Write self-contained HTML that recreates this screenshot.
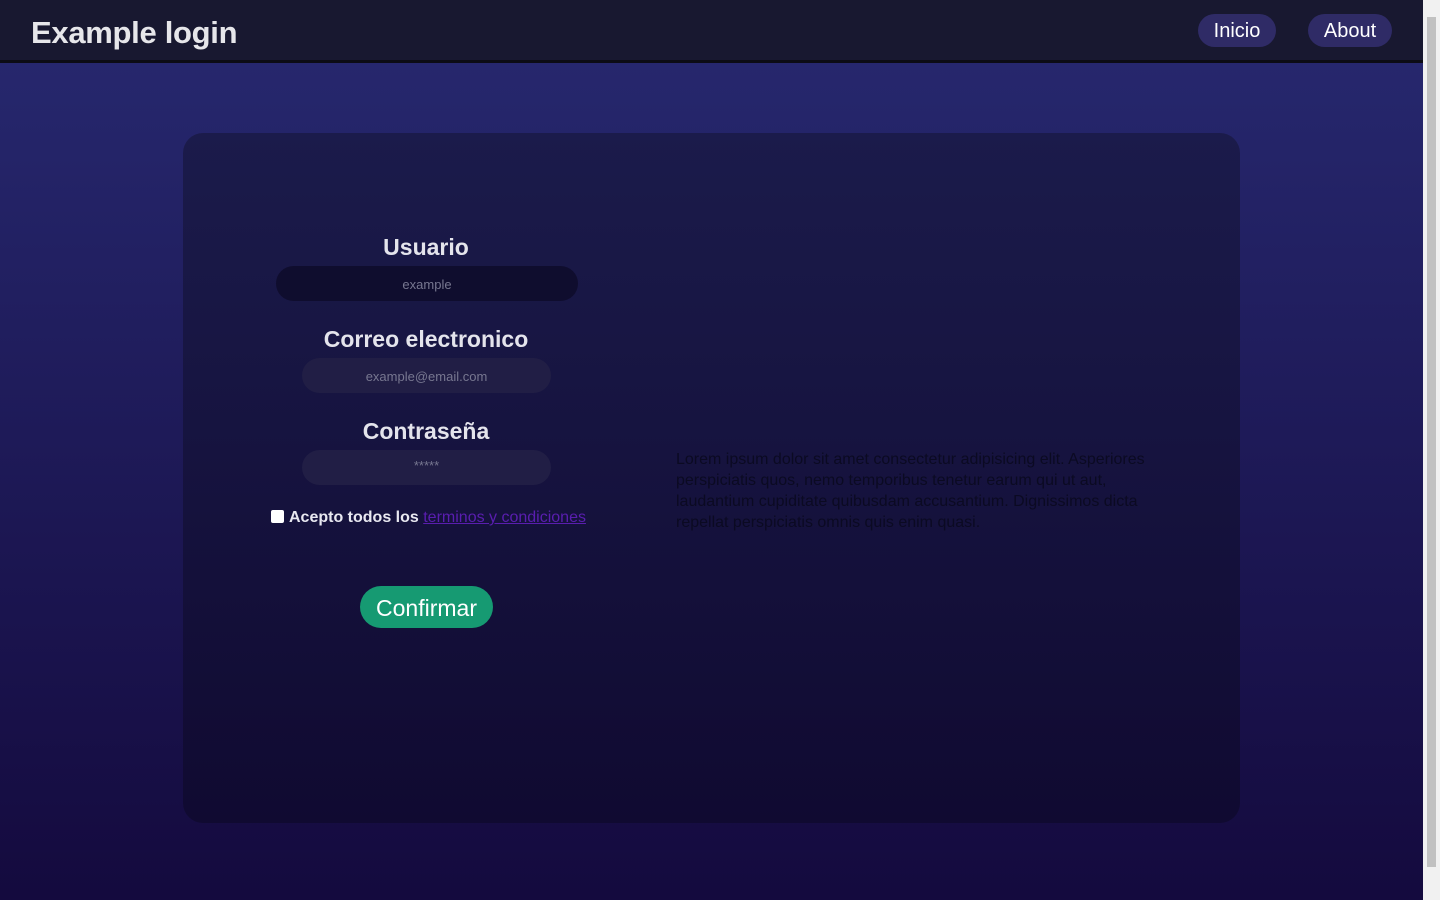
<!DOCTYPE html>
<html><head><meta charset="utf-8"><style>
*{margin:0;padding:0;box-sizing:border-box}
html,body{width:1440px;height:900px;overflow:hidden}
body{font-family:"Liberation Sans",sans-serif;background:linear-gradient(#26276d 62px,#140a3e 900px);position:relative}
.hdr{position:absolute;left:0;top:0;width:1423px;height:63px;background:#181830;border-bottom:3px solid #0c0c14}
.hdr h1{position:absolute;left:31px;top:15px;font-size:31px;font-weight:bold;color:#e6e6ea;letter-spacing:-0.3px}
.nb{position:absolute;top:14px;height:33px;border-radius:17px;background:#2f2b66;color:#fff;font-size:20px;line-height:35px;text-align:center}
.sb{position:absolute;right:0;top:0;width:17px;height:900px;background:#f1f1f1}
.sb div{position:absolute;left:4px;top:17px;width:9px;height:850px;background:#c1c1c1}
.card{position:absolute;left:183px;top:133px;width:1057px;height:690px;border-radius:20px;background:linear-gradient(#1b1b4b,#100a31)}
.lbl{position:absolute;width:100%;text-align:center;color:#e4e4ec;font-weight:bold;font-size:23px}
.inp{position:absolute;height:35px;border-radius:18px;text-align:center;font-size:13px;line-height:37px;color:#777790}
.lorem{position:absolute;left:493px;top:316px;width:480px;font-size:16px;line-height:21px;color:#0b0a22}
</style></head><body>
<div class="hdr"><h1>Example login</h1>
<div class="nb" style="left:1198px;width:78px">Inicio</div>
<div class="nb" style="left:1308px;width:84px">About</div></div>
<div class="card">
<div style="position:absolute;left:88px;top:0;width:310px;height:690px">
<div class="lbl" style="top:101px">Usuario</div>
<div class="inp" style="left:5px;width:302px;top:133px;background:#0f0d2e">example</div>
<div class="lbl" style="top:193px">Correo electronico</div>
<div class="inp" style="left:31px;width:249px;top:225px;background:#211e45">example@email.com</div>
<div class="lbl" style="top:285px">Contraseña</div>
<div class="inp" style="left:31px;width:249px;top:317px;background:#211e45;line-height:32px">*****</div>
<div style="position:absolute;left:0;top:376px;width:330px;font-size:16px;font-weight:bold;color:#e8e8f0;white-space:nowrap"><span style="display:inline-block;width:13px;height:13px;background:#fff;border-radius:2px;vertical-align:-1px;margin-right:5px"></span>Acepto todos los <span style="color:#5a1eb0;text-decoration:underline;font-weight:normal">terminos y condiciones</span></div>
<div style="position:absolute;left:89px;top:453px;width:133px;height:42px;border-radius:21px;background:#169a72;color:#fff;font-size:23px;line-height:44px;text-align:center">Confirmar</div>
</div>
<div class="lorem">Lorem ipsum dolor sit amet consectetur adipisicing elit. Asperiores perspiciatis quos, nemo temporibus tenetur earum qui ut aut, laudantium cupiditate quibusdam accusantium. Dignissimos dicta repellat perspiciatis omnis quis enim quasi.</div>
</div>
<div class="sb"><div></div></div>
</body></html>
